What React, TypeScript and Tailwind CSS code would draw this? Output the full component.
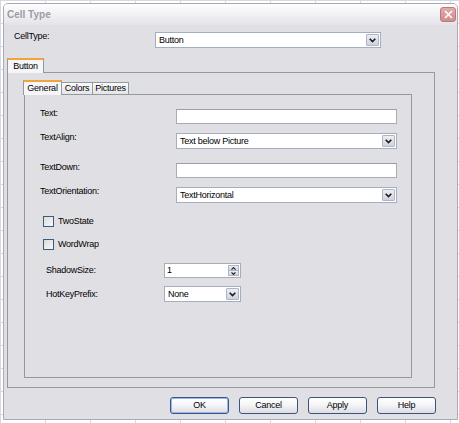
import React from "react";

const Chev = () => (
  <svg width="7" height="5" viewBox="0 0 7 5">
    <path d="M0.7 0.7 L3.5 3.6 L6.3 0.7" fill="none" stroke="#1b1b1b" strokeWidth="1.6" />
  </svg>
);

function SelectBox({ value, cls }: { value: string; cls: string }) {
  return (
    <div className={`flex items-stretch bg-white border border-[#a2afc2] p-[1px] ${cls}`}>
      <span className="flex-1 flex items-center pl-[2px] text-black leading-none">{value}</span>
      <span className="w-[13px] flex items-center justify-center bg-gradient-to-b from-[#eceef4] to-[#cfd3de] border border-[#aeb6c6] rounded-[1px]">
        <Chev />
      </span>
    </div>
  );
}

function TextBox({ value, cls }: { value?: string; cls: string }) {
  return (
    <div className={`flex items-center bg-white border border-[#a8acb4] border-t-[#9a9ea8] pl-[2px] leading-none ${cls}`}>
      {value}
    </div>
  );
}

function Check({ label }: { label: string }) {
  return (
    <div className="flex items-center pl-[18px]">
      <span className="w-[11px] h-[11px] border border-[#3c5b82] bg-gradient-to-br from-[#dcdcd6] to-[#f8f8f8]" />
      <span className="ml-[4px] leading-none">{label}</span>
    </div>
  );
}

function Btn({ label, def }: { label: string; def?: boolean }) {
  return (
    <div
      className={`w-[59px] h-[17px] flex items-center justify-center rounded-[3px] border border-[#3a5680] bg-gradient-to-b from-[#ffffff] via-[#f4f4f6] to-[#dcdce4] leading-none ${
        def ? "shadow-[inset_0_0_0_1px_#9ab8ea]" : ""
      }`}
    >
      {label}
    </div>
  );
}

export default function App() {
  return (
    <div className="w-[459px] h-[423px] overflow-hidden bg-white bg-[linear-gradient(to_right,#d4d8e0_1px,transparent_1px),linear-gradient(to_bottom,#d4d8e0_1px,transparent_1px)] bg-size-[45px_23px] pt-[3px] pl-[3px] font-['Liberation_Sans',Arial,sans-serif] text-[9px] tracking-[-0.25px] text-black">
      <div className="w-[455px] h-[417px] flex flex-col border border-[#a9aab4] rounded-t-[5px] bg-[#e0dfe3] overflow-hidden">
        {/* title bar */}
        <div className="h-[21px] flex items-center justify-between bg-gradient-to-b from-[#fdfdfe] via-[#f1f1f4] to-[#e3e3e9] pl-[3px] pr-[1px]">
          <span className="text-[10px] font-bold tracking-normal text-[#9c9ca4]">Cell Type</span>
          <span className="w-[16px] h-[15px] flex items-center justify-center rounded-[3px] bg-gradient-to-b from-[#e2aaaa] to-[#d08e8e] border border-[#c07878]">
            <svg width="9" height="9" viewBox="0 0 9 9">
              <path d="M1 1 L8 8 M8 1 L1 8" stroke="#ffffff" strokeWidth="1.6" />
            </svg>
          </span>
        </div>

        {/* body */}
        <div className="flex-1 flex flex-col">
          <div className="flex items-start mt-[5px] pl-[10px]">
            <span className="w-[141px] leading-[12px]">CellType:</span>
            <SelectBox value="Button" cls="mt-[2px] w-[226px] h-[16px]" />
          </div>

          {/* outer tab control */}
          <div className="ml-[3px] mt-[10px] w-[428px] flex flex-col">
            <div className="flex">
              <div className="relative z-10 -mb-[1px] w-[37px] h-[15px] flex items-center justify-center bg-[#f6f6f8] border-x border-[#919b9c] border-t-2 border-t-[#f0a53a] leading-none">
                Button
              </div>
            </div>
            <div className="h-[316px] border border-[#919b9c] flex flex-col">
              {/* inner tabs */}
              <div className="ml-[15px] mt-[7px] flex items-end">
                <div className="relative z-10 -mb-[1px] w-[39px] h-[15px] flex items-center justify-center bg-[#f6f6f8] border-x border-[#919b9c] border-t-2 border-t-[#f0a53a] leading-none">
                  General
                </div>
                <div className="w-[31px] h-[12px] flex items-center justify-center bg-gradient-to-b from-[#fbfbfc] to-[#e4e4ea] border-t border-r border-[#919b9c] leading-none">
                  Colors
                </div>
                <div className="w-[36px] h-[12px] flex items-center justify-center bg-gradient-to-b from-[#fbfbfc] to-[#e4e4ea] border-t border-r border-[#919b9c] leading-none">
                  Pictures
                </div>
              </div>
              <div className="ml-[16px] w-[388px] h-[284px] border border-[#919b9c] flex flex-col">
                <div className="flex items-start mt-[12px] pl-[15px]">
                  <span className="w-[136px] leading-[12px]">Text:</span>
                  <TextBox cls="mt-[2px] w-[221px] h-[15px]" />
                </div>
                <div className="flex items-start mt-[7px] pl-[15px]">
                  <span className="w-[136px] leading-[12px]">TextAlign:</span>
                  <SelectBox value="Text below Picture" cls="mt-[2px] w-[221px] h-[16px]" />
                </div>
                <div className="flex items-start mt-[12px] pl-[15px]">
                  <span className="w-[136px] leading-[12px]">TextDown:</span>
                  <TextBox cls="mt-[2px] w-[221px] h-[15px]" />
                </div>
                <div className="flex items-start mt-[7px] pl-[15px]">
                  <span className="w-[136px] leading-[12px]">TextOrientation:</span>
                  <SelectBox value="TextHorizontal" cls="mt-[2px] w-[221px] h-[16px]" />
                </div>
                <div className="mt-[13px]">
                  <Check label="TwoState" />
                </div>
                <div className="mt-[12px]">
                  <Check label="WordWrap" />
                </div>
                <div className="flex items-center mt-[13px] pl-[21px]">
                  <span className="w-[118px] leading-none">ShadowSize:</span>
                  <div className="w-[77px] h-[15px] flex items-stretch bg-white border border-[#a8acb4] p-[1px]">
                    <span className="flex-1 flex items-center pl-[1px] leading-none">1</span>
                    <span className="w-[11px] flex flex-col">
                      <span className="flex-1 flex items-center justify-center bg-gradient-to-b from-[#eceef4] to-[#d3d6e0] border border-[#aeb6c6]">
                        <svg width="5" height="3" viewBox="0 0 5 3"><path d="M0.5 2.6 L2.5 0.6 L4.5 2.6" fill="none" stroke="#1b1b1b" strokeWidth="1.1" /></svg>
                      </span>
                      <span className="flex-1 flex items-center justify-center bg-gradient-to-b from-[#eceef4] to-[#d3d6e0] border border-t-0 border-[#aeb6c6]">
                        <svg width="5" height="3" viewBox="0 0 5 3"><path d="M0.5 0.4 L2.5 2.4 L4.5 0.4" fill="none" stroke="#1b1b1b" strokeWidth="1.1" /></svg>
                      </span>
                    </span>
                  </div>
                </div>
                <div className="flex items-center mt-[8px] pl-[21px]">
                  <span className="w-[118px] leading-none">HotKeyPrefix:</span>
                  <SelectBox value="None" cls="w-[77px] h-[16px]" />
                </div>
              </div>
            </div>
          </div>

          {/* buttons */}
          <div className="flex gap-[10px] ml-[166px] mt-[9px]">
            <Btn label="OK" def />
            <Btn label="Cancel" />
            <Btn label="Apply" />
            <Btn label="Help" />
          </div>
        </div>
      </div>
    </div>
  );
}
